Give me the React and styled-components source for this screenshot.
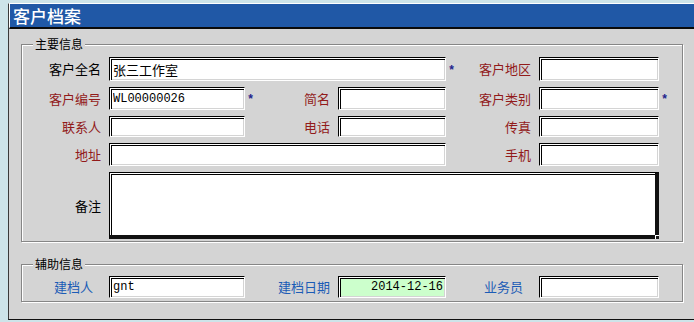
import styled, { createGlobalStyle } from "styled-components";

const GlobalStyle = createGlobalStyle`
    html, body {
        margin: 0;
        padding: 0;
        background: #cde4e9;
        overflow: hidden;
    }
    body {
        font-family: "Noto Sans CJK SC", "Liberation Sans", sans-serif;
    }
`;

const COLS = "87px 136px 13px 80px 108px 12px 81px 120px 14px";

const tones = {
    black: "#000000",
    red: "#921a1a",
    blue: "#1c5cb6",
};

const Window = styled.div`
    margin: 3px 0 0 8px;
    width: 700px;
    height: 317px;
    box-sizing: border-box;
    border-top: 1px solid #ffffff;
    border-left: 1px solid #3a3a3a;
    border-bottom: 1px solid #111111;
    background: #d4d4d4;
    display: flex;
    flex-direction: column;
`;

const TitleBar = styled.div`
    height: 25px;
    flex-shrink: 0;
    box-sizing: border-box;
    background: #2058a6;
    border-left: 1px solid #ffffff;
    border-bottom: 2px solid #0a0a0a;
    display: flex;
    align-items: center;
    padding-left: 3px;
    color: #ffffff;
    font-size: 17px;
    font-weight: 500;
`;

const Body = styled.div`
    display: flex;
    flex-direction: column;
    gap: 22px;
    padding: 15px 0 0 12px;
`;

const Group = styled.div`
    position: relative;
    width: 662px;
    box-sizing: border-box;
    border: 1px solid #868686;
    box-shadow: 1px 1px 0 #ffffff, inset 1px 1px 0 #ffffff;
    padding: ${(p) => p.$pad};
`;

const Legend = styled.span`
    position: absolute;
    top: -8px;
    left: 11px;
    padding: 0 2px;
    background: #d4d4d4;
    font-size: 12px;
    line-height: 14px;
    color: #000;
`;

const Grid = styled.div`
    display: grid;
    grid-template-columns: ${COLS};
    grid-template-rows: ${(p) => p.$rows};
    row-gap: 6px;
`;

const Label = styled.label`
    grid-column: ${(p) => p.$col};
    align-self: center;
    justify-self: end;
    padding-right: ${(p) => p.$pr || 8}px;
    font-size: 13px;
    line-height: 16px;
    color: ${(p) => tones[p.$tone]};
    white-space: nowrap;
`;

const Star = styled.span`
    grid-column: ${(p) => p.$col};
    align-self: center;
    padding: 3px 0 0 2px;
    font-family: "Liberation Mono", monospace;
    font-size: 12px;
    font-weight: bold;
    color: #23238c;
`;

const Field = styled.input`
    grid-column: ${(p) => p.$col};
    height: 100%;
    min-width: 0;
    box-sizing: border-box;
    margin: 0;
    padding: 0 2px 0 3px;
    border-style: solid;
    border-width: 1px;
    border-color: #000 #ffffff #ffffff #000;
    box-shadow: inset 1px 1px 0 #ffffff, inset 2px 2px 0 #000,
        inset -1px -1px 0 #d4d4d4;
    background: ${(p) => p.$bg || "#ffffff"};
    text-align: ${(p) => p.$align || "left"};
    font-family: ${(p) =>
        p.$mono
            ? `"Liberation Mono", monospace`
            : `"Noto Sans CJK SC", "Liberation Sans", sans-serif`};
    font-size: ${(p) => (p.$mono ? 12 : 13)}px;
    color: #000;
    outline: none;
`;

const MemoBox = styled.div`
    grid-column: ${(p) => p.$col};
    position: relative;
    height: 100%;
`;

const Memo = styled.textarea`
    display: block;
    width: 100%;
    height: 100%;
    box-sizing: border-box;
    margin: 0;
    padding: 2px 3px;
    resize: none;
    border-style: solid;
    border-width: 1px 4px 4px 1px;
    border-color: #000 #111 #111 #000;
    box-shadow: inset 1px 1px 0 #ffffff, inset 2px 2px 0 #000,
        inset -1px -1px 0 #ffffff;
    background: #ffffff;
    font-family: "Noto Sans CJK SC", sans-serif;
    font-size: 13px;
    outline: none;
`;

const Grip = styled.span`
    position: absolute;
    right: 0;
    bottom: 0;
    width: 4px;
    height: 4px;
    box-sizing: border-box;
    border-top: 1px solid #ffffff;
    border-left: 1px solid #ffffff;
    background: #1a1a1a;
`;

export default function App() {
    return (
        <>
            <GlobalStyle />
            <Window>
                <TitleBar>客户档案</TitleBar>
                <Body>
                    <Group $pad="12px 0 2px 0">
                        <Legend>主要信息</Legend>
                        <Grid $rows="24px 23px 21px 23px 67px">
                            <Label $col="1" $tone="black">客户全名</Label>
                            <Field $col="2 / 6" defaultValue="张三工作室" />
                            <Star $col="6">*</Star>
                            <Label $col="7" $tone="red">客户地区</Label>
                            <Field $col="8" />

                            <Label $col="1" $tone="red">客户编号</Label>
                            <Field $col="2" $mono defaultValue="WL00000026" />
                            <Star $col="3">*</Star>
                            <Label $col="4" $tone="red">简名</Label>
                            <Field $col="5" />
                            <Label $col="7" $tone="red">客户类别</Label>
                            <Field $col="8" />
                            <Star $col="9">*</Star>

                            <Label $col="1" $tone="red">联系人</Label>
                            <Field $col="2" />
                            <Label $col="4" $tone="red">电话</Label>
                            <Field $col="5" />
                            <Label $col="7" $tone="red">传真</Label>
                            <Field $col="8" />

                            <Label $col="1" $tone="red">地址</Label>
                            <Field $col="2 / 6" />
                            <Label $col="7" $tone="red">手机</Label>
                            <Field $col="8" />

                            <Label $col="1" $tone="black">备注</Label>
                            <MemoBox $col="2 / 9">
                                <Memo />
                                <Grip />
                            </MemoBox>
                        </Grid>
                    </Group>

                    <Group $pad="11px 0 3px 0">
                        <Legend>辅助信息</Legend>
                        <Grid $rows="22px">
                            <Label $col="1" $tone="blue" $pr={16}>建档人</Label>
                            <Field $col="2" $mono defaultValue="gnt" />
                            <Label $col="4" $tone="blue">建档日期</Label>
                            <Field
                                $col="5"
                                $mono
                                $bg="#ccffcc"
                                $align="right"
                                defaultValue="2014-12-16"
                            />
                            <Label $col="7" $tone="blue" $pr={16}>业务员</Label>
                            <Field $col="8" />
                        </Grid>
                    </Group>
                </Body>
            </Window>
        </>
    );
}
